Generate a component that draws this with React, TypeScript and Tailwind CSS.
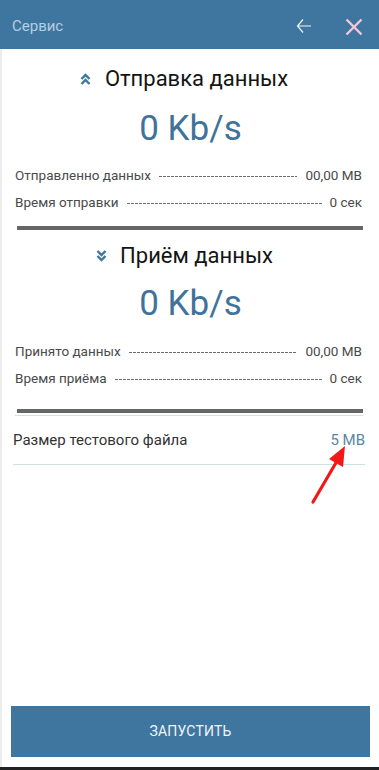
import React from "react";

const Dashes = () => (
  <div className="flex-1 mx-2 h-px bg-[repeating-linear-gradient(to_right,#6b6b6b_0_3px,transparent_3px_4px)] mt-[2px]" />
);

const Row = ({ label, value }: { label: string; value: string }) => (
  <div className="flex items-center h-[27px] pl-[13px] pr-[17px] text-[13.5px] text-[#4a4a4a]">
    <span>{label}</span>
    <Dashes />
    <span>{value}</span>
  </div>
);

const ChevUp = () => (
  <svg width="11" height="12" viewBox="0 0 11 12" className="mr-[14px]">
    <path d="M1.5 6 L5.5 2 L9.5 6" fill="none" stroke="#3f76a0" strokeWidth="2.4" />
    <path d="M1.5 11 L5.5 7 L9.5 11" fill="none" stroke="#3f76a0" strokeWidth="2.4" />
  </svg>
);

const ChevDown = () => (
  <svg width="11" height="12" viewBox="0 0 11 12" className="mr-[13px]">
    <path d="M1.5 1 L5.5 5 L9.5 1" fill="none" stroke="#3f76a0" strokeWidth="2.4" />
    <path d="M1.5 6 L5.5 10 L9.5 6" fill="none" stroke="#3f76a0" strokeWidth="2.4" />
  </svg>
);

export default function App() {
  return (
    <div className="relative w-[379px] h-[770px] bg-white overflow-hidden font-['Roboto',sans-serif] flex flex-col">
      <div className="h-[49px] bg-[#3f76a0] flex items-center pl-[12px] shrink-0">
        <span className="text-[15px] text-[#b4cde1] mt-[3px]">Сервис</span>
        <div className="flex-1" />
        <svg width="16" height="16" viewBox="0 0 16 16" className="mr-[33px] mt-[2px]">
          <path d="M1.5 8 H15 M7 1.5 L1.5 8 L7 14.5" fill="none" stroke="#f2f6fa" strokeWidth="1.2" />
        </svg>
        <svg width="18" height="18" viewBox="0 0 18 18" className="mr-[16px] mt-[4px]">
          <path d="M1.5 1.5 L16.5 16.5 M16.5 1.5 L1.5 16.5" fill="none" stroke="#f3c6d8" strokeWidth="2.4" />
        </svg>
      </div>

      <div className="flex-1 flex flex-col border-l-2 border-[#ececec]">
        <div className="mt-[16px] h-[28px] flex items-center justify-center pr-[13px] text-[22px] text-[#141414] leading-[28px]">
          <ChevUp />
          <span>Отправка данных</span>
        </div>
        <div className="mt-[16px] h-[40px] text-center text-[35px] leading-[40px] text-[#41739a]">0 Kb/s</div>
        <div className="mt-[13px]">
          <Row label="Отправленно данных" value="00,00 MB" />
          <Row label="Время отправки" value="0 сек" />
        </div>
        <div className="mt-[10px] ml-[15px] mr-[16px] h-[4px] bg-[#666666]" />

        <div className="mt-[12px] h-[28px] flex items-center justify-center pr-[12px] text-[22px] text-[#141414] leading-[28px]">
          <ChevDown />
          <span>Приём данных</span>
        </div>
        <div className="mt-[14px] h-[40px] text-center text-[35px] leading-[40px] text-[#41739a]">0 Kb/s</div>
        <div className="mt-[14px]">
          <Row label="Принято данных" value="00,00 MB" />
          <Row label="Время приёма" value="0 сек" />
        </div>
        <div className="mt-[17px] ml-[15px] mr-[16px] h-[4px] bg-[#666666]" />
        <div className="mt-[2px] ml-[13px] mr-[16px] h-px bg-[#cfe0e4]" />
        <div className="ml-[11px] mr-[14px] h-[49px] flex items-center justify-between border-b border-[#cfe0e4]">
          <span className="text-[15px] text-[#333333]">Размер тестового файла</span>
          <span className="text-[15px] text-[#5a86a5]">5 MB</span>
        </div>

        <div className="flex-1" />
        <div className="mx-[9px] h-[51px] bg-[#3f76a0] flex items-center justify-center text-[14px] text-[#f0f4f8] tracking-[0.2px]">
          ЗАПУСТИТЬ
        </div>
        <div className="h-[10px]" />
      </div>
      <div className="h-[3px] bg-[#222222] shrink-0" />

      <svg className="absolute left-0 top-0 pointer-events-none" width="379" height="770">
        <line x1="313" y1="502" x2="337" y2="461" stroke="#f21818" strokeWidth="3.2" strokeLinecap="round" />
        <polygon points="345,446 343,467 329,459" fill="#f21818" />
      </svg>
    </div>
  );
}
